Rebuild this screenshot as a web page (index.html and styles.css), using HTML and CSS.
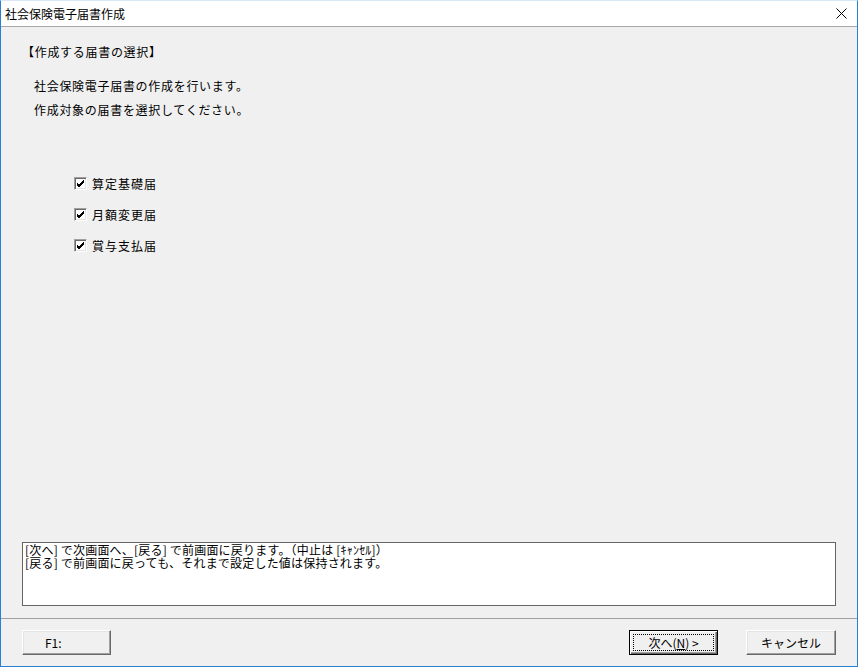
FILE: index.html
```html
<!DOCTYPE html>
<html lang="ja">
<head>
<meta charset="utf-8">
<title>社会保険電子届書作成</title>
<link rel="stylesheet" href="styles.css">
</head>
<body>
<div class="window">
  <div class="titlebar">
    <span class="title">社会保険電子届書作成</span>
    <span class="close">
      <svg width="11" height="11" viewBox="0 0 11 11"><path d="M0.5 0.5 L10.5 10.5 M10.5 0.5 L0.5 10.5" stroke="#000" stroke-width="1" fill="none"/></svg>
    </span>
  </div>
  <div class="content">
    <div class="heading">【作成する届書の選択】</div>
    <div class="intro">
      <div class="line">社会保険電子届書の作成を行います。</div>
      <div class="line">作成対象の届書を選択してください。</div>
    </div>
    <div class="checks">
      <label class="check"><span class="box"><svg width="9" height="9" viewBox="0 0 9 9"><path d="M1 4 L3 6 L8 1 M1 5 L3 7 L8 2 M1 6 L3 8 L8 3" stroke="#000" stroke-width="1" fill="none"/></svg></span><span>算定基礎届</span></label>
      <label class="check"><span class="box"><svg width="9" height="9" viewBox="0 0 9 9"><path d="M1 4 L3 6 L8 1 M1 5 L3 7 L8 2 M1 6 L3 8 L8 3" stroke="#000" stroke-width="1" fill="none"/></svg></span><span>月額変更届</span></label>
      <label class="check"><span class="box"><svg width="9" height="9" viewBox="0 0 9 9"><path d="M1 4 L3 6 L8 1 M1 5 L3 7 L8 2 M1 6 L3 8 L8 3" stroke="#000" stroke-width="1" fill="none"/></svg></span><span>賞与支払届</span></label>
    </div>
    <div class="message">
      <div>[次へ] で次画面へ、[戻る] で前画面に戻ります。（中止は [ｷｬﾝｾﾙ]）</div>
      <div>[戻る] で前画面に戻っても、それまで設定した値は保持されます。</div>
    </div>
  </div>
  <div class="footer">
    <button class="btn btn-f1">F1:</button>
    <div class="right">
      <button class="btn btn-default"><span class="focus">次へ(<u>N</u>) &gt;</span></button>
      <button class="btn btn-cancel">キャンセル</button>
    </div>
  </div>
</div>
</body>
</html>
```
FILE: styles.css
```css
html, body {
  margin: 0;
  padding: 0;
}
body {
  font-family: "Noto Sans CJK JP", "Noto Sans", sans-serif;
  font-size: 12px;
  color: #000;
  background: #f0f0f0;
}
.window {
  width: 858px;
  height: 667px;
  box-sizing: border-box;
  border: 1px solid #2a7fd2;
  border-top: 1px solid #d9e8f7;
  display: flex;
  flex-direction: column;
  background: #f0f0f0;
}
.titlebar {
  height: 25px;
  flex: none;
  background: #fff;
  border-bottom: 1px solid #a8a8a8;
  display: flex;
  align-items: center;
  justify-content: space-between;
  padding: 0 10px 0 4px;
  line-height: 16px;
}
.title {
  font-size: 12px;
  color: #000;
}
.close {
  display: flex;
  width: 11px;
  height: 11px;
}
.content {
  flex: 1;
  display: flex;
  flex-direction: column;
  padding: 17px 21px 12px 21px;
  min-height: 0;
  letter-spacing: 0.7px;
}
.heading {
  line-height: 16px;
  height: 16px;
}
.intro {
  margin-top: 14px;
  padding-left: 12px;
}
.intro .line {
  line-height: 24px;
  height: 24px;
}
.checks {
  margin-top: 46px;
  padding-left: 52px;
  display: flex;
  flex-direction: column;
  letter-spacing: 1px;
}
.check {
  display: flex;
  align-items: center;
  height: 31px;
  gap: 5px;
}
.box {
  width: 13px;
  height: 13px;
  box-sizing: border-box;
  background: #fff;
  border: 1px solid;
  border-color: #a0a0a0 #fff #fff #a0a0a0;
  box-shadow: inset 1px 1px 0 #696969, inset -1px -1px 0 #e3e3e3;
  display: flex;
  align-items: center;
  justify-content: center;
}
.box svg {
  display: block;
}
.message {
  margin-top: auto;
  height: 64px;
  box-sizing: border-box;
  background: #fff;
  border: 1px solid #646464;
  padding: 0 2px;
  line-height: 13px;
  font-size: 12px;
  letter-spacing: 0.2px;
}
.footer {
  flex: none;
  border-top: 1px solid #a0a0a0;
  padding: 11px 21px 11px 21px;
  display: flex;
  justify-content: space-between;
  align-items: center;
}
.right {
  display: flex;
  gap: 28px;
}
.btn {
  font-family: "Noto Sans CJK JP", "Noto Sans", sans-serif;
  font-size: 12px;
  color: #000;
  height: 25px;
  width: 89px;
  box-sizing: border-box;
  background: #f0f0f0;
  border: 1px solid;
  border-color: #fff #696969 #696969 #fff;
  box-shadow: inset -1px -1px 0 #a0a0a0, inset 1px 1px 0 #e3e3e3;
  padding: 0;
  margin: 0;
  display: flex;
  align-items: center;
  justify-content: center;
  line-height: 14px;
}
.btn-f1 {
  justify-content: flex-start;
  padding-left: 22px;
}
.btn-cancel {
  width: 90px;
}
.btn-default {
  border: 1px solid #000;
  box-shadow: inset 1px 1px 0 #fff, inset -1px -1px 0 #696969, inset -2px -2px 0 #a0a0a0;
  padding: 3px;
}
.focus {
  flex: 1;
  align-self: stretch;
  border: 1px dotted #000;
  display: flex;
  align-items: center;
  justify-content: center;
}
.focus u {
  text-decoration: underline;
}
```
